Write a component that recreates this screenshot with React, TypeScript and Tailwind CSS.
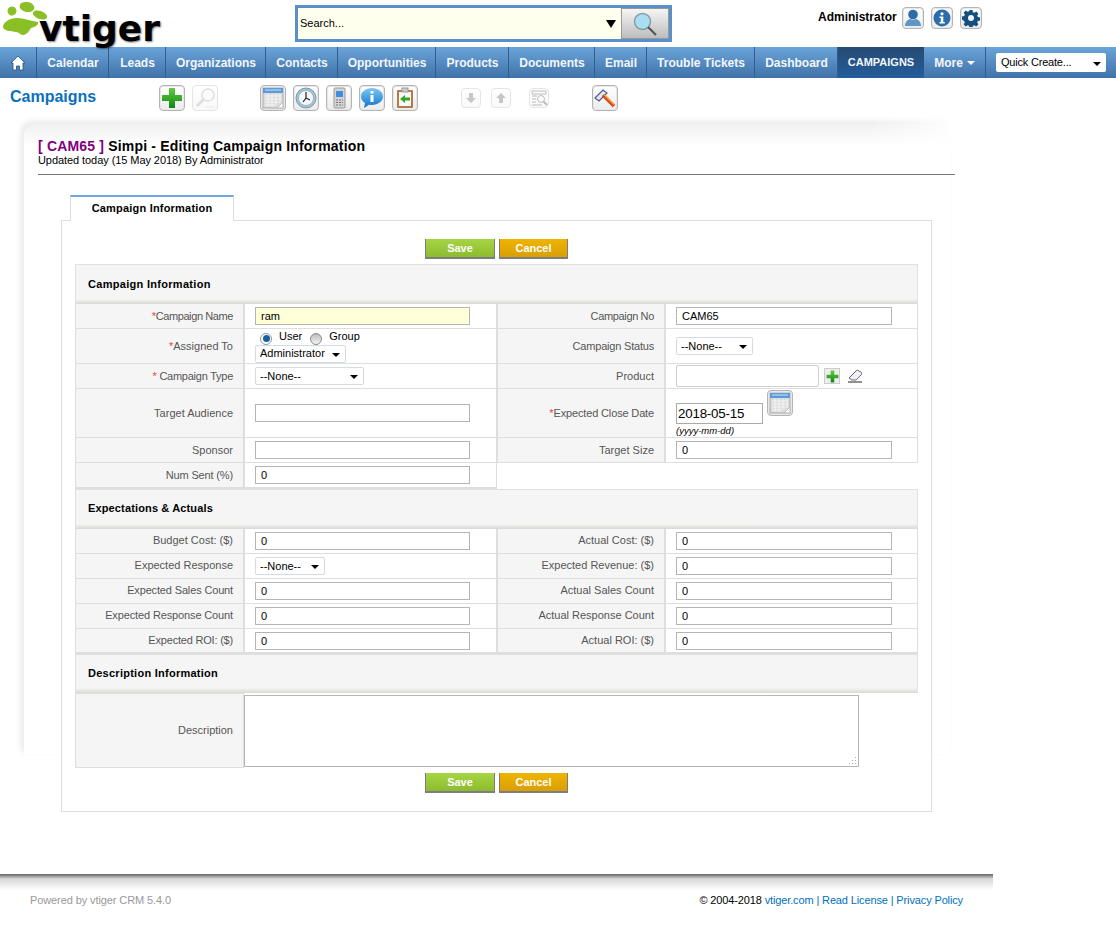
import React from "react";

const font = { fontFamily: '"Liberation Sans", Arial, sans-serif' };

function Caret({ className = "" }: { className?: string }) {
  return <span className={"inline-block w-0 h-0 border-l-[4px] border-r-[4px] border-t-[4px] border-l-transparent border-r-transparent border-t-black " + className} />;
}

function Box({ size = 26, faded = false, children }: { size?: number; faded?: boolean; children: React.ReactNode }) {
  return (
    <div
      className={
        "shrink-0 flex items-center justify-center rounded-[4px] border bg-gradient-to-b from-white to-[#ececec] " +
        (faded ? "border-[#aaa] opacity-30" : "border-[#b4b4b4] shadow-[inset_0_0_0_1px_#e8e8e8]")
      }
      style={{ width: size, height: size }}
    >
      {children}
    </div>
  );
}

const PlusIcon = ({ s = 22 }: { s?: number }) => (
  <svg width={s} height={s} viewBox="0 0 22 22">
    <defs>
      <linearGradient id="gp" x1="0" y1="0" x2="0" y2="1">
        <stop offset="0" stopColor="#63c947" />
        <stop offset="1" stopColor="#0f8a10" />
      </linearGradient>
    </defs>
    <path d="M8 1h6v7h7v6h-7v7H8v-7H1V8h7z" fill="url(#gp)" />
  </svg>
);
const SearchFaded = () => (
  <svg width="22" height="22" viewBox="0 0 22 22" fill="none">
    <circle cx="14" cy="8" r="6" stroke="#999" strokeWidth="1.5" />
    <path d="M9.5 12.5L3 19" stroke="#999" strokeWidth="3" />
    <path d="M11 20h9" stroke="#bbb" />
  </svg>
);
const CalIcon = ({ s = 22 }: { s?: number }) => (
  <svg width={s} height={s} viewBox="0 0 22 22">
    <rect x="1" y="1" width="20" height="20" fill="#dcdcdc" stroke="#a8a8a8" />
    <rect x="1" y="1" width="20" height="5" fill="#5a9bd8" />
    <path d="M3 3h16" stroke="#cfe4f7" />
    <path d="M3 9h16M3 12h16M3 15h16M3 18h11M6 7v13M10 7v13M14 7v10M18 7v7" stroke="#f4f4f4" />
    <path d="M15 21l6-6v6z" fill="#fff" stroke="#bbb" />
  </svg>
);
const ClockIcon = () => (
  <svg width="22" height="22" viewBox="0 0 22 22" fill="none">
    <circle cx="11" cy="11" r="10" fill="#a5c6da" stroke="#7895a8" />
    <circle cx="11" cy="11" r="7.5" fill="#f4f8fb" stroke="#6d8798" strokeWidth="0.5" />
    <path d="M11 5v6l-3 4M11 11l4 2" stroke="#222" strokeWidth="1.2" />
  </svg>
);
const PhoneIcon = () => (
  <svg width="22" height="22" viewBox="0 0 22 22">
    <rect x="6" y="1" width="11" height="20" rx="1" fill="#d4d4d4" stroke="#999" />
    <rect x="8" y="4" width="7" height="6" fill="#3f8fe0" />
    <path d="M8 13h2M11 13h2M14 13h1M8 15.5h2M11 15.5h2M14 15.5h1M8 18h2M11 18h2M14 18h1" stroke="#777" />
  </svg>
);
const ChatIcon = () => (
  <svg width="24" height="24" viewBox="0 0 24 24">
    <defs>
      <linearGradient id="gc" x1="0" y1="0" x2="0" y2="1">
        <stop offset="0" stopColor="#7cc7f5" />
        <stop offset="1" stopColor="#0f75c8" />
      </linearGradient>
    </defs>
    <path d="M12 2c6 0 11 3.6 11 8.5S18 19 12 19c-1 0-2-.1-3-.3L4 22l1-5C2.500 15.500 1 13.200 1 10.500 1 5.600 6 2 12 2z" fill="url(#gc)" />
    <rect x="10.500" y="9" width="3" height="7" fill="#fff" />
    <rect x="10.500" y="5" width="3" height="2.500" fill="#fff" />
  </svg>
);
const ClipIcon = () => (
  <svg width="22" height="22" viewBox="0 0 22 22">
    <rect x="3" y="3" width="16" height="18" rx="1" fill="#b9784a" />
    <rect x="5" y="5" width="12" height="14" fill="#fafafa" />
    <rect x="8" y="1" width="6" height="4" fill="#ccc" stroke="#999" />
    <path d="M6 12l5-4v2.500h5v3h-5V16z" fill="#35a821" />
  </svg>
);
const ArrowBox = ({ up = false }: { up?: boolean }) => (
  <svg width="14" height="14" viewBox="0 0 14 14">
    <path d={up ? "M7 2l5 5H9v5H5V7H2z" : "M7 12L2 7h3V2h4v5h3z"} fill="#444" />
  </svg>
);
const FindIcon = () => (
  <svg width="18" height="18" viewBox="0 0 18 18" fill="none" stroke="#222">
    <path d="M2 2h14v3H2zM2 7h5M2 10h4M2 13h4M2 16h10" />
    <circle cx="11" cy="10" r="3.500" />
    <path d="M13.500 12.500L17 16" strokeWidth="2" />
  </svg>
);
const HammerIcon = () => (
  <svg width="24" height="24" viewBox="0 0 24 24" fill="none">
    <path d="M2 12L10 4l4 3-8 8z" fill="#e2e9f7" stroke="#46558e" strokeWidth="1.1" />
    <path d="M10 9l11 11" stroke="#d8441e" strokeWidth="3.500" />
    <path d="M11 8.500l10 10" stroke="#f5b33a" strokeWidth="1.200" />
  </svg>
);
const Magnifier = () => (
  <svg width="26" height="26" viewBox="0 0 26 26" fill="none">
    <circle cx="10.500" cy="10.500" r="8" fill="#a8def0" stroke="#8a9aa0" strokeWidth="1.500" />
    <path d="M16 16l8 8" stroke="#555" strokeWidth="2.200" />
  </svg>
);
const UserIcon = () => (
  <svg width="18" height="18" viewBox="0 0 18 18">
    <circle cx="9" cy="5.500" r="4.800" fill="#2f6ba5" />
    <path d="M1 17c0-4 2.500-6.500 5-7 1.500 1 4.500 1 6 0 2.500.5 5 3 5 7z" fill="#5f95c7" />
  </svg>
);
const InfoIcon = () => (
  <svg width="18" height="18" viewBox="0 0 18 18">
    <circle cx="9" cy="9" r="8.500" fill="#2a6da8" />
    <circle cx="9" cy="4.800" r="1.600" fill="#fff" />
    <path d="M6.500 7.500h3.800v5.500h1.500v1.500H6.500V13h1.300V9H6.500z" fill="#fff" />
  </svg>
);
const GearIcon = () => (
  <svg width="18" height="18" viewBox="0 0 18 18">
    <path
      fillRule="evenodd"
      d="M7.500 1h3l.4 2.200 1.500.6 1.900-1.200 2.100 2.100-1.200 1.900.6 1.500 2.200.4v3l-2.200.4-.6 1.500 1.200 1.900-2.100 2.100-1.900-1.200-1.500.6-.4 2.200h-3l-.4-2.200-1.500-.6-1.900 1.200-2.100-2.100 1.200-1.900-.6-1.500L0 10.500v-3l2.200-.4.6-1.500L1.600 3.700l2.100-2.100 1.900 1.200 1.500-.6zM9 6a3 3 0 100 6 3 3 0 000-6z"
      fill="#134f80"
    />
  </svg>
);
const Eraser = () => (
  <svg width="16" height="14" viewBox="0 0 16 14" fill="none">
    <path d="M2 9l7-7c1-1 2-1 3 0l2 1c1 1 1 2 0 3l-5 5H5z" fill="#eef1f6" stroke="#667" />
    <path d="M1 13h14" stroke="#222" />
  </svg>
);

function Select({ w, value }: { w: number; value: string }) {
  return (
    <div
      className="h-[18px] flex items-center justify-between pl-[4px] pr-[5px] bg-white border border-[#d5dbe3] rounded-[2px] text-[11px] text-black"
      style={{ width: w }}
    >
      <span>{value}</span>
      <Caret className="mt-[2px]" />
    </div>
  );
}

function Input({ value = "", bg = "bg-white", w = "w-[215px]" }: { value?: string; bg?: string; w?: string }) {
  return (
    <input
      readOnly
      value={value}
      className={"block h-[18px] border border-[#b5b5b5] px-[5px] text-[11px] text-black outline-none " + w + " " + bg}
      style={font}
    />
  );
}

function Label({ children, w, left = false, up = false }: { children: React.ReactNode; w: string; left?: boolean; up?: boolean }) {
  return (
    <div
      className={
        "flex items-center justify-end pr-[10px] bg-[#f5f5f5] text-[11px] text-[#555] whitespace-pre border-[#dedede] " +
        w +
        (left ? " border-l border-r-2" : " border-l-2 border-r-2") +
        (up ? " pb-[2px]" : "")
      }
    >
      {children}
    </div>
  );
}

const Req = ({ children = "*" }: { children?: React.ReactNode }) => <span className="text-[#f04040]">{children}</span>;

function Row({ h = "h-[25px]", up = false, last = false, l1, f1, l2, f2 }: { h?: string; up?: boolean; last?: boolean; l1: React.ReactNode; f1: React.ReactNode; l2: React.ReactNode; f2: React.ReactNode }) {
  return (
    <div className={"flex border-[#dedede] " + h + (last ? " border-b-2" : " border-b")}>
      <Label w="w-[170px]" left up={up}>{l1}</Label>
      <div className="w-[251px] flex items-center pl-[10px]">{f1}</div>
      <Label w="w-[170px]" up={up}>{l2}</Label>
      <div className="w-[252px] flex items-center pl-[10px] border-r border-[#dedede]">{f2}</div>
    </div>
  );
}

function Section({ title, h, pt, t }: { title: string; h: string; pt: string; t: string }) {
  return (
    <div className={"flex flex-col bg-[#f5f5f5] border border-b-0 border-[#e0e0e0] " + h}>
      <div className={"flex-1 flex items-center pl-[12px] text-[11px] font-bold text-black " + pt + " " + t}>{title}</div>
      <div className="h-[5px] bg-gradient-to-b from-[#f5f5f5] to-[#d8d8d4]" />
    </div>
  );
}

function Buttons() {
  return (
    <div className="flex justify-center gap-[4px]">
      <button className="w-[70px] h-[20px] text-[11px] font-bold text-white bg-gradient-to-b from-[#a6d544] to-[#8dbb2f] border-b-2 border-r border-l border-[#7d7d7d]" style={font}>Save</button>
      <button className="w-[69px] h-[20px] text-[11px] font-bold text-white bg-gradient-to-b from-[#efb400] to-[#d99f04] border-b-2 border-r border-l border-[#7d7d7d]" style={font}>Cancel</button>
    </div>
  );
}

const navItems: [string, string][] = [
  ["Calendar", "w-[72px]"],
  ["Leads", "w-[57px]"],
  ["Organizations", "w-[100px]"],
  ["Contacts", "w-[72px]"],
  ["Opportunities", "w-[98px]"],
  ["Products", "w-[73px]"],
  ["Documents", "w-[86px]"],
  ["Email", "w-[52px]"],
  ["Trouble Tickets", "w-[108px]"],
  ["Dashboard", "w-[83px]"],
];

export default function App() {
  return (
    <div className="w-[1116px] h-[928px] bg-white overflow-hidden text-black" style={font}>
      {/* header */}
      <div className="h-[47px] flex">
        <div className="w-[295px] relative shrink-0">
          <svg width="50" height="40" viewBox="0 0 50 40" className="absolute left-0 top-0">
            <g fill="#8abf25">
              <ellipse cx="12" cy="11" rx="4.500" ry="4.500" transform="rotate(-15 12 11)" />
              <ellipse cx="27" cy="7" rx="7.500" ry="5" transform="rotate(10 27 7)" />
              <ellipse cx="40" cy="15" rx="7.500" ry="4" transform="rotate(20 40 15)" />
              <path d="M3 27c0-5 7-9 14-9 7 0 14 3 21 4 1 3-3 5-7 6-2 3-4 7-8 7-3 0-4-3-7-3-5-1-13-1-13-5z" />
            </g>
          </svg>
          <div
            className="absolute left-[39px] top-[9px] text-[36px] leading-[40px] font-bold text-black"
            style={{ fontFamily: '"DejaVu Sans", sans-serif', textShadow: "1px 1px 2px rgba(0,0,0,.5)" }}
          >
            vtiger
          </div>
        </div>
        <div className="mt-[5px] h-[37px] w-[377px] border-[3px] border-[#5a8fc9] bg-[#ffffee] flex items-center shrink-0">
          <span className="ml-[2px] text-[11px] flex-1">Search...</span>
          <span className="w-0 h-0 border-l-[5px] border-r-[5px] border-t-[8px] border-l-transparent border-r-transparent border-t-black mr-[5px]" />
          <div className="w-[48px] h-[31px] flex items-center justify-center bg-gradient-to-b from-[#f6f6f6] to-[#bdbdbd] border border-[#999]">
            <Magnifier />
          </div>
        </div>
        <div className="ml-[146px] mt-[7px] flex gap-[7px] h-[22px] items-start">
          <span className="text-[12px] font-bold leading-[20px] mr-[-2px]">Administrator</span>
          <Box size={22}><UserIcon /></Box>
          <Box size={22}><InfoIcon /></Box>
          <Box size={22}><GearIcon /></Box>
        </div>
      </div>

      {/* nav */}
      <div className="h-[31px] flex bg-gradient-to-b from-[#6ba4da] to-[#3f72a8] text-[#f2f6fb] text-[12px] font-bold">
        <div className="w-[37px] flex items-center justify-center border-r border-[#2f5f92]">
          <svg width="16" height="16" viewBox="0 0 16 16" fill="#fff" stroke="#1f4f80" strokeWidth="0.8">
            <path d="M8 1L1 8h2v7h3.500v-4h3v4H13V8h2z" />
          </svg>
        </div>
        {navItems.map(([t, w]) => (
          <div key={t} className={"flex items-center justify-center pl-[1px] border-r border-[#2f5f92] whitespace-nowrap " + w}>{t}</div>
        ))}
        <div className="w-[86px] flex items-center justify-center text-[11px] bg-gradient-to-b from-[#244a72] to-[#245e9c]">CAMPAIGNS</div>
        <div className="w-[62px] flex items-center justify-center gap-[4px] border-r border-[#2f5f92]">
          More
          <span className="w-0 h-0 border-l-[4px] border-r-[4px] border-t-[4px] border-l-transparent border-r-transparent border-t-white" />
        </div>
        <div className="ml-[10px] mt-[6px] w-[110px] h-[19px] bg-white rounded-[2px] flex items-center justify-between pl-[5px] pr-[5px] text-[11px] tracking-[-0.2px] font-normal text-black">
          <span>Quick Create...</span>
          <Caret className="mt-[2px]" />
        </div>
      </div>

      {/* toolbar */}
      <div className="h-[40px] flex items-center pl-[10px]">
        <div className="w-[149px] text-[16px] font-bold text-[#0a70bd] -mt-[2px]">Campaigns</div>
        <div className="flex gap-[7px] -mt-[1px]">
          <Box><PlusIcon /></Box>
          <Box faded><SearchFaded /></Box>
        </div>
        <div className="flex gap-[7px] ml-[42px] -mt-[1px]">
          <Box><CalIcon /></Box>
          <Box><ClockIcon /></Box>
          <Box><PhoneIcon /></Box>
          <Box><ChatIcon /></Box>
          <Box><ClipIcon /></Box>
        </div>
        <div className="flex gap-[10px] ml-[43px] -mt-[1px]">
          <Box size={20} faded><ArrowBox /></Box>
          <Box size={20} faded><ArrowBox up /></Box>
        </div>
        <div className="ml-[18px] -mt-[1px]"><Box size={20} faded><FindIcon /></Box></div>
        <div className="ml-[43px] -mt-[1px]"><Box><HammerIcon /></Box></div>
      </div>

      {/* card */}
      <div className="relative ml-[24px] mt-[6px] w-[926px] h-[630px] rounded-tl-[12px] shadow-[-3px_-3px_6px_rgba(0,0,0,0.09)] bg-[linear-gradient(#f1f1f1,#ffffff_22px)] pl-[14px] pt-[14px]">
        <div className="absolute -right-[10px] -top-[8px] h-[32px] w-[90px] bg-gradient-to-r from-transparent to-white pointer-events-none" />
        <div className="text-[14px] leading-[16px] font-bold tracking-[0.18px]">
          <span className="text-[#800080]">[ CAM65 ]</span> Simpi - Editing Campaign Information
        </div>
        <div className="text-[11px] leading-[13px] tracking-[-0.07px]">Updated today (15 May 2018) By Administrator</div>
        <div className="w-[917px] h-px bg-[#777] mt-[7px]" />

        {/* tab */}
        <div className="relative z-10 ml-[32px] mt-[20px] w-[164px] h-[26px] -mb-px pb-[2px] bg-white border-t-2 border-l border-r border-t-[#6ca6e0] border-l-[#dedede] border-r-[#dedede] flex items-center justify-center text-[11px] font-bold tracking-[0.2px]">
          Campaign Information
        </div>
        <div className="relative ml-[23px] w-[871px] h-[592px] border border-[#dedede] bg-white pt-[18px]">
          <Buttons />
          <div className="ml-[13px] mt-[5px] w-[843px]">
            <Section title="Campaign Information" h="h-[40px]" pt="pt-[4px]" t="tracking-[0.3px]" />
            <Row
              l1={<span className="tracking-[-0.4px]"><Req />Campaign Name</span>}
              f1={<Input value="ram" bg="bg-[#ffffd8]" />}
              l2={<span className="tracking-[-0.35px]">Campaign No</span>}
              f2={<Input value="CAM65" w="w-[216px]" />}
            />
            <Row
              h="h-[35px]"
              l1={<><Req />Assigned To</>}
              f1={
                <div className="w-full text-[11px]">
                  <div className="flex items-center h-[15px] pl-[5px]">
                    <span className="w-[12px] h-[12px] rounded-full border border-[#8a9aa8] bg-white flex items-center justify-center mt-[3px]">
                      <span className="w-[7px] h-[7px] rounded-full bg-[#17609c]" />
                    </span>
                    <span className="ml-[7px] -mt-[2px]">User</span>
                    <span className="ml-[8px] w-[12px] h-[12px] rounded-full border border-[#8a8a8a] bg-gradient-to-b from-[#bbb] to-[#f5f5f5] mt-[3px]" />
                    <span className="ml-[7px] -mt-[2px]">Group</span>
                  </div>
                  <Select w={91} value="Administrator" />
                </div>
              }
              l2={<span className="tracking-[-0.2px]">Campaign Status</span>}
              f2={<Select w={77} value="--None--" />}
            />
            <Row
              l1={<span className="tracking-[-0.25px]"><Req /> Campaign Type</span>}
              f1={<Select w={109} value="--None--" />}
              l2="Product"
              f2={
                <div className="flex items-center">
                  <input readOnly className="block w-[143px] h-[22px] border border-[#cfcfcf] rounded-[2px] bg-white" />
                  <div className="ml-[5px] w-[16px] h-[16px] border border-[#ccc] flex items-center justify-center bg-[#eee]"><PlusIcon s={13} /></div>
                  <div className="ml-[7px]"><Eraser /></div>
                </div>
              }
            />
            <Row
              h="h-[49px]"
              l1="Target Audience"
              f1={<Input />}
              l2={<span className="tracking-[-0.15px]"><Req />Expected Close Date</span>}
              f2={
                <div className="flex items-start h-full">
                  <div className="mt-[14px]">
                    <input readOnly value="2018-05-15" className="block w-[87px] h-[21px] border border-[#aaa] px-[1px] text-[13.33px] tracking-[-0.2px] text-black" style={font} />
                    <div className="text-[9.5px] italic leading-[12px] mt-[1px]">(yyyy-mm-dd)</div>
                  </div>
                  <div className="ml-[4px] mt-[1px]"><Box><CalIcon /></Box></div>
                </div>
              }
            />
            <Row l1="Sponsor" f1={<Input />} l2="Target Size" f2={<Input value="0" w="w-[216px]" />} />
            <div className="flex h-[26px] w-[422px] border-b-2 border-r border-[#dedede]">
              <Label w="w-[170px]" left><span className="tracking-[-0.15px]">Num Sent (%)</span></Label>
              <div className="flex items-center pl-[10px]"><Input value="0" /></div>
            </div>

            <Section title="Expectations & Actuals" h="h-[40px]" pt="pt-[3px]" t="tracking-[0.14px]" />
            <Row up l1="Budget Cost: ($)" f1={<Input value="0" />} l2="Actual Cost: ($)" f2={<Input value="0" w="w-[216px]" />} />
            <Row up l1="Expected Response" f1={<Select w={70} value="--None--" />} l2="Expected Revenue: ($)" f2={<Input value="0" w="w-[216px]" />} />
            <Row up l1={<span className="tracking-[-0.15px]">Expected Sales Count</span>} f1={<Input value="0" />} l2="Actual Sales Count" f2={<Input value="0" w="w-[216px]" />} />
            <Row up l1={<span className="tracking-[-0.13px]">Expected Response Count</span>} f1={<Input value="0" />} l2="Actual Response Count" f2={<Input value="0" w="w-[216px]" />} />
            <Row last l1={<span className="tracking-[-0.2px]">Expected ROI: ($)</span>} f1={<Input value="0" />} l2="Actual ROI: ($)" f2={<Input value="0" w="w-[216px]" />} />

            <Section title="Description Information" h="h-[39px]" pt="pt-[3px]" t="tracking-[0.26px]" />
            <div className="flex h-[75px]">
              <div className="w-[169px] h-full flex items-center justify-end pr-[10px] bg-[#f5f5f5] border border-[#dedede] text-[11px] text-[#555]">Description</div>
              <div className="relative mt-[2px] w-[615px] h-[72px]">
                <textarea readOnly className="block w-full h-full resize-none border border-[#b5b5b5] bg-white" />
                <svg width="8" height="8" viewBox="0 0 8 8" className="absolute right-[2px] bottom-[2px]" fill="#aaa">
                  <rect x="6" y="0" width="1" height="1" />
                  <rect x="3" y="3" width="1" height="1" />
                  <rect x="6" y="3" width="1" height="1" />
                  <rect x="0" y="6" width="1" height="1" />
                  <rect x="3" y="6" width="1" height="1" />
                  <rect x="6" y="6" width="1" height="1" />
                </svg>
              </div>
            </div>
          </div>
          <div className="mt-[5px]"><Buttons /></div>
        </div>
      </div>

      {/* footer */}
      <div className="mt-[120px] w-[993px] h-[16px] bg-gradient-to-b from-[#666] via-[#d8d8d8] via-30% to-white" />
      <div className="w-[993px] flex justify-between pl-[30px] pr-[30px] mt-[2px] text-[11px]">
        <span className="text-[#999] tracking-[-0.1px]">Powered by vtiger CRM 5.4.0</span>
        <span className="tracking-[-0.13px]">
          © 2004-2018 <span className="text-[#0070c0]">vtiger.com | Read License | Privacy Policy</span>
        </span>
      </div>
    </div>
  );
}
